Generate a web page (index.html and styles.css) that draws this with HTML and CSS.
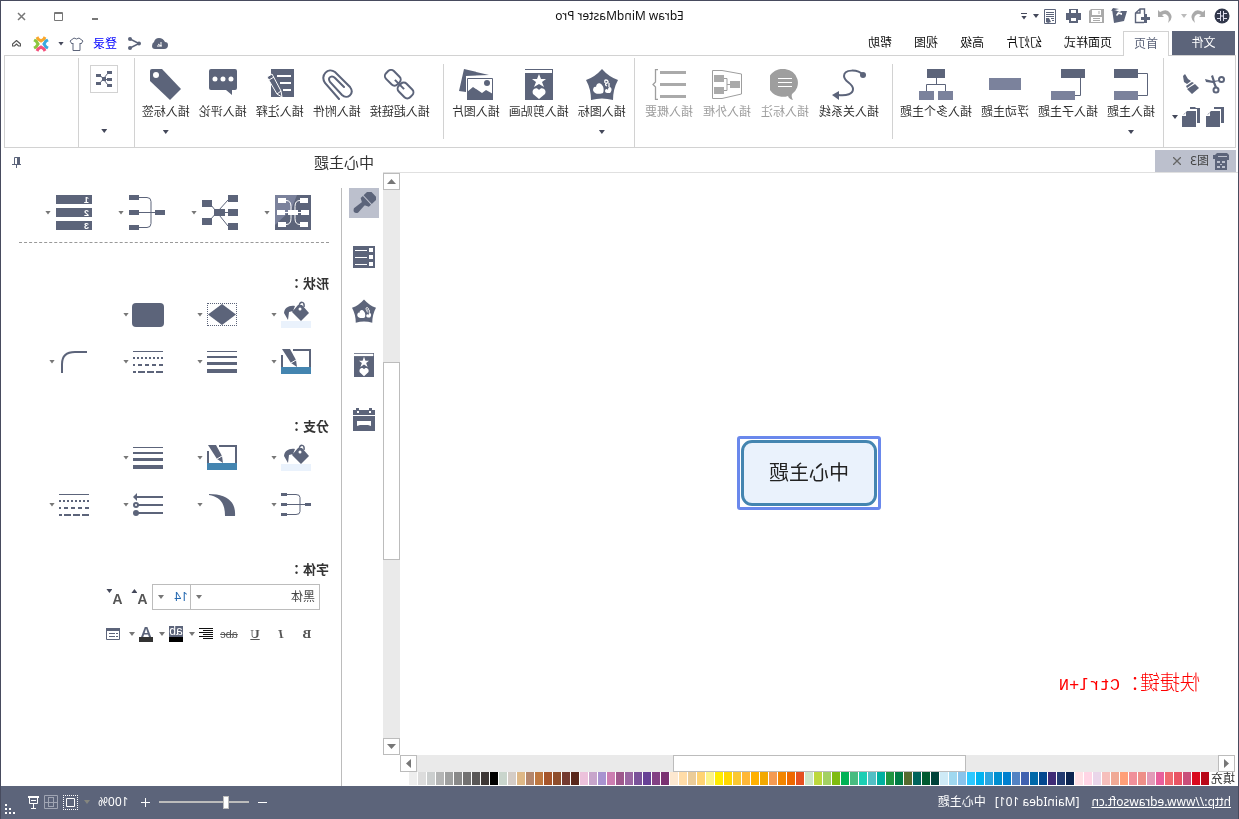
FILE: index.html
```html
<!DOCTYPE html>
<html lang="zh-CN">
<head>
<meta charset="utf-8">
<title>Edraw MindMaster Pro</title>
<link rel="stylesheet" href="styles.css">
</head>
<body>
<svg class="defs" width="0" height="0" aria-hidden="true">
  <defs>
    <symbol id="pentagon" viewBox="0 0 32 31">
      <path fill="#5c647a" d="M16 0q7 8 16 11q-5 9-5 20q-11-3-22 0q0-11-5-20q9-3 16-11z"/>
      <path fill="#fff" d="M15 24c2 1 9 2 10-3 0-3-2-4-3-3 0-4-4-5-6-2-2 2-2 6-1 8zM8 24c-2-2-2-5 0-6 2 0 2 2 2 3 1-2 3-1 3 1 0 1-1 2-2 2z"/>
      <path fill="none" stroke="#fff" stroke-width="1.3" d="M11 17c2-1 2-3 0-3s-1-3 1-3 1 2 1 3M9 14v4"/>
    </symbol>
    <symbol id="clipart" viewBox="0 0 28 31">
      <path fill="#5c647a" d="M0 0h28v31H0z"/><path fill="#fff" d="M1 1h27v3H1z"/>
      <path fill="#fff" d="M14 5l2 5h5l-4 3 2 5-5-3-5 3 2-5-4-3h5zM14 30l-6-5c-2-4 3-8 6-4 3-4 8 0 6 4z"/>
    </symbol>
    <symbol id="bucket" viewBox="0 0 30 27">
      <path fill="#eaf2fc" d="M0 20h30v7H0z"/>
      <path fill="#5c647a" d="M2 12l7-8 4 0 6 7-9 9zM16 5c6-1 11 2 11 7l-4 7-1-8-4-1z"/>
      <path fill="none" stroke="#5c647a" stroke-width="1.500" d="M7 6c-1-6 4-6 5-1"/>
      <circle cx="11" cy="8" r="1.500" fill="#fff"/>
    </symbol>
    <symbol id="pen" viewBox="0 0 30 25">
      <path fill="none" stroke="#5c647a" stroke-width="2" d="M18 1H1v18M29 19V6"/>
      <path fill="#5c647a" d="M21 0h8l-9 14-6 4 1-7z"/><path stroke="#fff" d="M15 11l5 3"/>
      <path fill="#4485b0" d="M0 18h30v7H0z"/>
    </symbol>
    <symbol id="widths" viewBox="0 0 30 22">
      <path fill="#5c647a" d="M0 0h30v1H0zM0 5h30v2H0zM0 11h30v3H0zM0 18h30v4H0z"/>
    </symbol>
    <symbol id="dashes" viewBox="0 0 30 22">
      <path stroke="#5c647a" d="M0 .5h30"/>
      <g stroke="#5c647a" stroke-width="2"><path stroke-dasharray="2 2" d="M0 7h30"/><path stroke-dasharray="4 3" d="M0 14h30"/><path stroke-dasharray="7 2" d="M0 21h30"/></g>
    </symbol>
  </defs>
</svg>

<div class="app">
  <header class="titlebar">
    <div class="quick">
      <svg width="16" height="16" viewBox="0 0 16 16"><circle cx="8" cy="8" r="7.500" fill="#32384c"/><path fill="none" stroke="#dde" d="M6.500 3v10M9.500 3v10M3 5.500h3.500M3 10.500h3.500M9.500 5.500H13M9.500 10.500H13M6.500 8h3"/></svg>
      <button class="tool" aria-label="撤销"><svg width="14" height="13" viewBox="0 0 14 13"><path fill="#aaa" d="M0 0l2 2q7-4 10 1 4 5-2 10 2-6-1-8-2-2-5 0l2 2H0z"/></svg></button>
      <i class="caret pale"></i>
      <button class="tool" aria-label="重做"><svg width="14" height="13" viewBox="0 0 14 13"><path fill="#aaa" d="M14 0l-2 2q-7-4-10 1-4 5 2 10-2-6 1-8 2-2 5 0L8 7h6z"/></svg></button>
      <button class="tool" aria-label="新建"><svg width="16" height="16" viewBox="0 0 16 16"><path fill="none" stroke="#5c647a" stroke-width="1.400" d="M6 14.500h8.500V5L10 1H5.500v5M10 1v4h4"/><path fill="#5c647a" d="M3 6h3v3h3v3H6v3H3v-3H0V9h3z"/></svg></button>
      <button class="tool" aria-label="打开"><svg width="16" height="16" viewBox="0 0 16 16"><path fill="#5c647a" d="M0 3h6l1 1 8-3-2 14-10-2zM8 1l6-1 2 3z"/><path fill="#fff" d="M5 5l4-1 2 3-1 1-2-2-3 1z"/></svg></button>
      <button class="tool" aria-label="保存"><svg width="15" height="16" viewBox="0 0 15 16"><path fill="#aaa" d="M0 1h13l2 2v12H0z"/><path fill="#fff" d="M3 2h9v5H3zM2 9h11v5H2z"/><path stroke="#aaa" d="M4 10.500h7M4 12.500h7M5 3v3"/></svg></button>
      <button class="tool" aria-label="打印"><svg width="15" height="14" viewBox="0 0 15 14"><path fill="#5c647a" d="M3 0h9v4h3v7h-3v3H3v-3H0V4h3z"/><path fill="#fff" d="M5 1h5v3H5zM5 9h5v3H5z"/></svg></button>
      <button class="tool" aria-label="打印预览"><svg width="12" height="15" viewBox="0 0 12 15"><path fill="none" stroke="#5c647a" d="M.5.500h11v14H.500zM2 3.500h8M2 5.500h8M2 7.500h8M2 9.500h3M2 11.500h2"/><path fill="#5c647a" d="M7 9h3v4l-2 1-3-1z"/></svg></button>
      <i class="caret"></i>
      <button class="tool more" aria-label="自定义"><i class="caret"></i></button>
    </div>
    <h1>Edraw MindMaster Pro</h1>
    <div class="winctl">
      <button class="tool" aria-label="最小化"><svg width="9" height="9"><path stroke="#777" stroke-width="2" d="M2 7h6"/></svg></button>
      <button class="tool" aria-label="最大化"><svg width="9" height="9"><path fill="none" stroke="#777" d="M.5.500h8v8h-8zM0 1.500h9"/></svg></button>
      <button class="tool" aria-label="关闭"><svg width="9" height="9"><path stroke="#777" stroke-width="1.500" d="M1 1l7 7M8 1L1 8"/></svg></button>
    </div>
  </header>

  <nav class="tabs">
    <button class="tab file">文件</button>
    <button class="tab active">首页</button>
    <button class="tab">页面样式</button>
    <button class="tab">幻灯片</button>
    <button class="tab">高级</button>
    <button class="tab">视图</button>
    <button class="tab">帮助</button>
    <div class="account">
      <svg width="16" height="11" viewBox="0 0 16 11"><path fill="#5c647a" d="M4 11Q0 11 0 7q0-3 3-3Q5 0 9 0q4 0 5 4 2 1 2 4 0 3-3 3z"/><path fill="none" stroke="#fff" d="M6 8h5M7 4v4l3-2"/></svg>
      <svg width="13" height="13" viewBox="0 0 13 13"><path fill="none" stroke="#5c647a" stroke-width="1.500" d="M11 2L2 6.500 11 11"/><g fill="#5c647a"><circle cx="11" cy="2" r="2"/><circle cx="2" cy="6.500" r="2"/><circle cx="11" cy="11" r="2"/></g></svg>
      <a href="#login">登录</a>
      <svg class="skin" width="15" height="14" viewBox="0 0 15 14"><path fill="none" stroke="#5c647a" d="M5 1Q7.500 3 10 1l4 3-2 3-1-1v7.500H4V6L3 7 1 4z"/></svg>
      <i class="caret"></i>
      <svg width="16" height="16" viewBox="0 0 16 16"><g fill="none" stroke-width="3"><path stroke="#f9a72b" d="M4 1l1 2 3 2 3-2 1-2"/><path stroke="#39a9e0" d="M1 4l2 1 2 3-2 3-2 1"/><path stroke="#8cc63f" d="M15 4l-2 1-2 3 2 3 2 1"/><path stroke="#f4517c" d="M4 15l1-2 3-2 3 2 1 2"/></g></svg>
      <button class="tool" aria-label="折叠功能区"><svg width="9" height="8" viewBox="0 0 9 8"><path fill="none" stroke="#555" stroke-width="1.200" d="M.5 4l4-3.500 4 3.500v2h-2l-2-2-2 2h-2z"/></svg></button>
    </div>
  </nav>

  <section class="ribbon">
    <div class="clipboard">
      <button class="tool" aria-label="剪切"><svg width="20" height="20" viewBox="0 0 20 20"><g fill="none" stroke="#5c647a" stroke-width="2"><circle cx="3.500" cy="5.500" r="2.500"/><circle cx="9" cy="16" r="2.500"/></g><path fill="#5c647a" d="M5 6l7 1 8-2-1 3-7 1-2 5-2-1 2-5-4-1zM12 1l2 1-2 6-2-1z"/></svg></button>
      <button class="tool" aria-label="格式刷"><svg width="18" height="20" viewBox="0 0 18 20"><path fill="#5c647a" d="M15 0l2 2-1 6-3 2-4-3 3-2zM8 8l6 4-1 2-7-5zM5 10l8 5-5 5-7-6z"/></svg></button>
      <span></span>
      <button class="tool" aria-label="复制"><svg width="19" height="20" viewBox="0 0 19 20"><path fill="#5c647a" d="M0 0h10v2H3v14H0zM4 4h9l5 5v11H4z"/><path fill="#fff" d="M14 4v5h4v-1l-3-1z"/></svg></button>
      <button class="tool" aria-label="粘贴"><svg width="19" height="20" viewBox="0 0 19 20"><path fill="#5c647a" d="M0 1h4l1-1h5v2H3v14H0zM4 4h9l5 5v11H4z"/><path fill="#fff" d="M14 4v5h4v-1l-3-1z"/></svg></button>
      <i class="caret"></i>
    </div>
    <i class="sep tall"></i>
    <div class="group g9 first">
      <button class="cmd"><svg width="34" height="31"><path fill="#5c647a" d="M10 0h24v9H10z"/><path fill="#7b829c" d="M10 22h24v9H10z"/><path fill="none" stroke="#5c647a" d="M10 4.500H.5v22H10"/></svg><span>插入主题</span><i class="caret"></i></button>
      <button class="cmd"><svg width="34" height="31"><path fill="#5c647a" d="M0 0h24v9H0z"/><path fill="#7b829c" d="M10 22h24v9H10z"/><path fill="none" stroke="#5c647a" d="M4.500 9v17.500H10"/></svg><span>插入子主题</span></button>
      <button class="cmd"><svg width="32" height="31"><path fill="#7b829c" d="M0 9h32v12H0z"/></svg><span>浮动主题</span></button>
      <button class="cmd"><svg width="34" height="31"><path fill="#5c647a" d="M8 0h18v9H8z"/><path fill="#7b829c" d="M0 22h15v9H0zM19 22h15v9H19z"/><path fill="none" stroke="#5c647a" d="M16.500 9v6.500M7.500 22v-6.500h19V22"/></svg><span>插入多个主题</span></button>
    </div>
    <i class="sep"></i>
    <div class="group g10 wide">
      <button class="cmd"><svg width="34" height="31" viewBox="0 0 34 31"><circle cx="3" cy="6" r="3" fill="#5c647a"/><path fill="none" stroke="#5c647a" stroke-width="2" d="M3 6C8 0 22 0 22 7c0 6-9 7-9 13 0 5 6 7 15 6"/><path fill="#5c647a" d="M27 22l7 4-7 5z"/></svg><span>插入关系线</span></button>
      <button class="cmd off"><svg width="30" height="31" viewBox="0 0 30 31"><path fill="#9e9e9e" d="M15 0a15 14 0 1 1-3 27q-1 3-5 4 2-3 1-6A15 14 0 0 1 15 0z"/><path stroke="#fff" d="M8 9.500h14M8 13.500h14M8 17.500h14"/></svg><span>插入标注</span></button>
      <button class="cmd off"><svg width="30" height="31" viewBox="0 0 30 31"><path fill="none" stroke="#9e9e9e" d="M.5 5L20 1.500h9.500v28H20L.5 25z"/><path fill="#aaa" d="M2 12h10v7H2zM18 6h10v7H18zM18 18h10v7H18z"/><path fill="none" stroke="#9e9e9e" d="M12 15.500h3M18 9.500h-3v12h3"/></svg><span>插入外框</span></button>
      <button class="cmd off"><svg width="34" height="31" viewBox="0 0 34 31"><path fill="#aaa" d="M0 2h26v3H0zM0 14h26v3H0zM0 26h26v3H0z"/><path fill="none" stroke="#9e9e9e" stroke-width="1.300" d="M28 .5h2.500V13l2.500 2.500-2.500 2.500v12.500H28"/></svg><span>插入概要</span></button>
    </div>
    <i class="sep tall"></i>
    <div class="group g9 pics">
      <button class="cmd"><svg width="32" height="31"><use href="#pentagon" width="32" height="31"/></svg><span>插入图标</span><i class="caret"></i></button>
      <button class="cmd"><svg width="28" height="31"><use href="#clipart" width="28" height="31"/></svg><span>插入剪贴画</span></button>
      <button class="cmd"><svg width="34" height="31" viewBox="0 0 34 31"><path fill="#5c647a" d="M4 6L29 0l5 22-7 1V7z"/><path fill="#fff" stroke="#5c647a" d="M.5 9.500h25v21H.500z"/><circle cx="6" cy="14" r="3" fill="#5c647a"/><path fill="#5c647a" d="M0 25l7-4 4 3 9-6 6 5v8H0z"/></svg><span>插入图片</span></button>
    </div>
    <i class="sep"></i>
    <div class="group g9 wide">
      <button class="cmd"><svg width="31" height="31" viewBox="0 0 31 31"><g fill="none" stroke="#5c647a" stroke-width="2" transform="rotate(-45 15.500 15.500)"><rect x="-1" y="10" width="16" height="11" rx="4"/><rect x="17" y="10" width="16" height="11" rx="4"/><path d="M9 15.500h13"/></g></svg><span>插入超链接</span></button>
      <button class="cmd"><svg width="32" height="31" viewBox="0 0 32 31"><path fill="none" stroke="#5c647a" stroke-width="2" stroke-linecap="round" d="M14 30L28 14c5-8-3-16-10-11L3 18c-5 7 3 13 8 8L23 13c3-5-2-7-5-4L9 18"/></svg><span>插入附件</span></button>
      <button class="cmd"><svg width="28" height="31" viewBox="0 0 28 31"><path fill="#5c647a" d="M0 0h23v28H0z"/><path stroke="#fff" stroke-width="2" d="M3 7h14M3 14h11M3 21h8"/><path fill="#5c647a" stroke="#fff" d="M22 5l5 3-10 17-5 3 1-6z"/><path stroke="#fff" d="M20 8l5 3M13 22l4 3"/></svg><span>插入注释</span></button>
      <button class="cmd"><svg width="28" height="31" viewBox="0 0 28 31"><path fill="#5c647a" d="M2 0h24q2 0 2 2v17q0 2-2 2H11l-6 5v-5H2q-2 0-2-2V2q0-2 2-2z"/><g fill="#fff"><circle cx="6" cy="10" r="2.500"/><circle cx="14" cy="10" r="2.500"/><circle cx="22" cy="10" r="2.500"/></g></svg><span>插入评论</span></button>
      <button class="cmd"><svg width="31" height="31" viewBox="0 0 31 31"><path fill="#5c647a" d="M19 0h10q2 0 2 2v10L11 31 0 20z"/><circle cx="25" cy="6" r="3" fill="#fff"/></svg><span>插入标签</span><i class="caret"></i></button>
    </div>
    <i class="sep tall"></i>
    <div class="gallery">
      <button class="tool box" aria-label="布局"><svg width="16" height="16" viewBox="0 0 16 16"><path fill="#5c647a" d="M0 0h5v3H0zM0 7h5v3H0zM0 13h5v3H0zM11 3h5v3h-5zM11 11h5v3h-5zM6 6h4v4H6z"/><path stroke="#5c647a" d="M4 2l8 10M4 14l8-10M4 8.500h4"/></svg></button>
      <i class="caret"></i>
    </div>
    <i class="sep tall"></i>
  </section>

  <main class="work">
    <section class="docs">
      <div class="doctabs">
        <button class="doctab">
          <svg width="16" height="17" viewBox="0 0 16 17"><path fill="#5c647a" d="M0 2l2-2h10l2 2h2v4h-2v11H2V7H0z"/><path fill="#bcc0cd" d="M2 3h9v1H2zM4 8h3v2H4zM9 8h3v2H9zM4 13h3v2H4zM9 13h3v2H9zM7 11h2v1H7z"/></svg>
          <span>图3</span>
          <svg width="8" height="8"><path stroke="#666" stroke-width="1.300" d="M0 0l8 8M8 0L0 8"/></svg>
        </button>
      </div>
      <div class="editor">
        <div class="canvas">
          <div class="node"><div>中心主题</div></div>
          <p class="hint">快捷键：<span>Ctrl+N</span></p>
        </div>
        <div class="vscroll">
          <button class="end" aria-label="向上"><i class="up"></i></button>
          <i class="s173"></i><i class="thumb s196"></i><i class="s179"></i>
          <button class="end" aria-label="向下"><i class="down"></i></button>
        </div>
      </div>
      <div class="hscroll">
        <button class="end" aria-label="向左"><i class="left"></i></button>
        <i class="s253"></i><i class="thumb s291"></i><i class="s257"></i>
        <button class="end" aria-label="向右"><i class="right"></i></button>
      </div>
      <div class="palette"><span>填充</span><div id="swatches"></div></div>
    </section>

    <aside class="side">
      <header><h2>中心主题</h2><button class="tool" aria-label="固定"><svg width="9" height="11" viewBox="0 0 9 11"><path fill="none" stroke="#5c647a" d="M1.500 7V.5h5V7M0 7.500h9M4.500 8v3"/><path fill="#5c647a" d="M1 0h3v7H1z"/></svg></button></header>
      <div class="sidebody">
        <div class="strip">
          <button class="tool on" aria-label="格式"><svg width="24" height="23" viewBox="0 0 24 23"><g fill="#5c647a" transform="rotate(-47 12 11)"><path d="M6-2h12v8H6zM6 7h12v3l-4 2H10l-4-2zM10 11h4l1 11q-3 5-6 0z"/></g></svg></button>
          <button class="tool" aria-label="页面"><svg width="22" height="22"><path fill="#5c647a" d="M0 0h22v22H0z"/><path fill="#fff" d="M2 2h4v4H2zM2 9h4v4H2zM2 16h4v4H2zM8 4h12v1H8zM8 11h12v1H8zM8 18h12v1H8z"/></svg></button>
          <button class="tool" aria-label="图标"><svg width="24" height="24"><use href="#pentagon" width="24" height="24"/></svg></button>
          <button class="tool" aria-label="剪贴画"><svg width="20" height="24" viewBox="0 0 28 31" preserveAspectRatio="none"><use href="#clipart" width="28" height="31"/></svg></button>
          <button class="tool" aria-label="任务"><svg width="22" height="23"><path fill="#5c647a" d="M0 2h3V0h3v2h10V0h3v2h3v5H0zM0 8h22v15H0z"/><path fill="#fff" d="M4 3h2v2H4zM16 3h2v2h-2zM4 13h14v5l-3-1H7l-3 1z"/></svg></button>
        </div>
        <div class="panel">
          <div class="grid layouts">
            <button class="pick"><svg width="36" height="35"><path fill="#5c647a" d="M0 0h36v35H0z"/><path fill="#7b829c" d="M14 0h22v30L20 15z"/><path fill="#fff" d="M3 3h8v5H3zM2 15h8v5H2zM3 27h8v5H3zM25 3h8v5h-8zM26 15h8v5h-8zM25 27h8v5h-8zM13 15h10v5H13z"/><path fill="none" stroke="#fff" d="M11 5.500q5 0 5 6v12q0 6-5 6M25 5.500q-5 0-5 6v12q0 6 5 6M2 17.500h32"/></svg><i class="caret grey"></i></button>
            <button class="pick"><svg width="36" height="35"><path fill="#5c647a" d="M0 0h10v7H0zM0 14h10v7H0zM0 28h10v7H0zM26 5h10v7H26zM26 23h10v7H26zM13 14h11v7H13z"/><path stroke="#5c647a" d="M10 5l18 20M10 31L27 10M10 17.500h5"/></svg><i class="caret grey"></i></button>
            <button class="pick"><svg width="36" height="35"><path fill="#5c647a" d="M0 15h10v5H0zM26 0h10v5H26zM26 15h10v5H26zM26 30h10v5H26z"/><path fill="none" stroke="#5c647a" d="M10 17.500h16M26 2.500h-8q-4 0-4 4v22q0 4 4 4h8"/></svg><i class="caret grey"></i></button>
            <button class="pick"><svg width="36" height="35"><path fill="#5c647a" d="M0 0h36v9H0zM0 13h36v9H0zM0 26h36v9H0z"/><g fill="#fff" font-family="Liberation Sans" font-size="9" font-weight="bold"><text x="3" y="8">1</text><text x="3" y="21">2</text><text x="3" y="34">3</text></g></svg><i class="caret grey"></i></button>
          </div>
          <h3>形状：</h3>
          <div class="grid">
            <button class="pick"><svg width="30" height="27"><use href="#bucket" width="30" height="27"/></svg><i class="caret grey"></i></button>
            <button class="pick"><svg width="30" height="23"><path fill="none" stroke="#5c647a" stroke-dasharray="1 1" d="M0 .5h30M0 22.500h30M.5 0v23M29.500 0v23"/><path fill="#5c647a" d="M15 1l14 10.500L15 22 1 11.500z"/></svg><i class="caret grey"></i></button>
            <button class="pick"><svg width="32" height="24"><rect width="32" height="24" rx="4" fill="#5c647a"/></svg><i class="caret grey"></i></button>
            <span></span>
            <button class="pick"><svg width="30" height="25"><use href="#pen" width="30" height="25"/></svg><i class="caret grey"></i></button>
            <button class="pick"><svg width="30" height="22"><use href="#widths" width="30" height="22"/></svg><i class="caret grey"></i></button>
            <button class="pick"><svg width="30" height="22"><use href="#dashes" width="30" height="22"/></svg><i class="caret grey"></i></button>
            <button class="pick"><svg width="30" height="22"><path fill="none" stroke="#5c647a" stroke-width="2" d="M2 1h12q13 0 13 12v9"/></svg><i class="caret grey"></i></button>
          </div>
          <h3>分支：</h3>
          <div class="grid">
            <button class="pick"><svg width="30" height="27"><use href="#bucket" width="30" height="27"/></svg><i class="caret grey"></i></button>
            <button class="pick"><svg width="30" height="25"><use href="#pen" width="30" height="25"/></svg><i class="caret grey"></i></button>
            <button class="pick"><svg width="30" height="22"><use href="#widths" width="30" height="22"/></svg><i class="caret grey"></i></button>
            <span></span>
            <button class="pick"><svg width="30" height="23"><path fill="#5c647a" d="M0 10h6v3H0zM24 0h6v3h-6zM24 10h6v3h-6zM24 20h6v3h-6z"/><path fill="none" stroke="#5c647a" d="M6 11.500h18M24 1.500h-9q-4 0-4 3v14q0 3 4 3h9"/></svg><i class="caret grey"></i></button>
            <button class="pick"><svg width="30" height="22"><path fill="#5c647a" d="M2 22C1 8 10 0 28 0v1C17 3 12 9 12 22z"/></svg><i class="caret grey"></i></button>
            <button class="pick"><svg width="30" height="23"><g fill="none" stroke="#5c647a" stroke-width="2"><path d="M0 4h27M0 12h25M0 20h26"/><circle cx="27" cy="12" r="2"/></g><path fill="#5c647a" d="M26 0l4 4-4 4z"/><circle cx="27" cy="20" r="3" fill="#5c647a"/></svg><i class="caret grey"></i></button>
            <button class="pick"><svg width="30" height="22"><use href="#dashes" width="30" height="22"/></svg><i class="caret grey"></i></button>
          </div>
          <h3>字体：</h3>
          <div class="fontrow">
            <label class="field family"><select aria-label="字体"><option>黑体</option></select><i class="caret grey"></i></label>
            <label class="field size"><select aria-label="字号"><option>14</option></select><i class="caret grey"></i></label>
            <button class="tool letter" aria-label="增大字号">A<i class="caret flip"></i></button>
            <button class="tool letter" aria-label="减小字号">A<i class="caret"></i></button>
          </div>
          <div class="fmtrow">
            <button class="tool fmt"><b>B</b></button>
            <button class="tool fmt"><em>I</em></button>
            <button class="tool fmt"><u>U</u></button>
            <button class="tool fmt"><s>abc</s></button>
            <button class="tool fmt" aria-label="对齐"><svg width="14" height="12"><path stroke="#111" d="M0 .5h14M0 2.500h10M0 4.500h14M0 6.500h10M0 8.500h14M0 10.500h10"/></svg><i class="caret grey"></i></button>
            <button class="tool fmt"><span class="mark">ab</span><i class="caret grey"></i></button>
            <button class="tool fmt"><span class="ink">A</span><i class="caret grey"></i></button>
            <button class="tool fmt" aria-label="更多"><svg width="14" height="12"><path fill="none" stroke="#5c647a" d="M.5.500h13v11H.500zM2 5.500h2M2 8.500h2M5 5.500h6M5 8.500h6"/><path fill="#5c647a" d="M0 0h14v3H0z"/></svg></button>
          </div>
        </div>
      </div>
    </aside>
  </main>

  <footer class="status">
    <a href="http://www.edrawsoft.cn">http://www.edrawsoft.cn</a>
    <span class="info">[MainIdea 101]</span>
    <span>中心主题</span>
    <div class="zoom">
      <button class="tool" aria-label="缩小"><svg width="9" height="9"><path stroke="#fff" d="M0 4.500h9"/></svg></button>
      <input type="range" min="0" max="100" value="23" aria-label="缩放">
      <button class="tool" aria-label="放大"><svg width="9" height="9"><path stroke="#fff" d="M0 4.500h9M4.500 0v9"/></svg></button>
      <output>100%</output>
      <i class="caret dim"></i>
      <div class="views">
        <button class="tool" aria-label="适合页面"><svg width="15" height="15"><path fill="none" stroke="#fff" stroke-dasharray="1 1" d="M0 .5h15M0 14.500h15M.5 0v15M14.500 0v15"/><path fill="none" stroke="#fff" d="M3.500 3.500h8v8h-8z"/></svg></button>
        <button class="tool" aria-label="适合宽度"><svg width="14" height="14"><path fill="none" stroke="#a0a5b3" d="M.5.500h13v13H.500zM4.500 2v10M9.500 2v10M1 7.500h12M4 2.500h6M4 11.500h6"/></svg></button>
        <button class="tool" aria-label="演示"><svg width="11" height="13"><path fill="none" stroke="#fff" d="M1.500 1v6.500h8V1M5.500 7v5M3 12.500h5M3 4.500h5"/><path stroke="#fff" stroke-width="2" d="M0 1h11"/></svg></button>
      </div>
      <svg class="grip" width="11" height="11"><path fill="#fff" d="M8 0h2v2H8zM4 4h2v2H4zM8 4h2v2H8zM0 8h2v2H0zM4 8h2v2H4zM8 8h2v2H8z"/></svg>
    </div>
  </footer>
</div>
<script src="script.js"></script>
</body>
</html>
```
FILE: styles.css
```css
* { box-sizing: border-box; }
body { margin: 0; background: #fff; color: #333; font: 12px/16px "Noto Sans", "Noto Sans CJK SC", sans-serif; }
button { font: inherit; color: inherit; background: none; border: 0; padding: 0; }
h1, h2, h3, p { margin: 0; font-weight: normal; }
svg { display: block; flex: none; }
.defs { position: absolute; }

/* The whole window is shown mirrored */
.app { display: flex; flex-direction: column; height: 100vh; min-height: 700px; transform: scaleX(-1); border: 1px solid #474b5e; border-bottom: 0; overflow: hidden; white-space: nowrap; }

.tool { display: flex; align-items: center; justify-content: center; position: relative; }
.caret { display: block; flex: none; width: 6px; height: 4px; background: #44485a; clip-path: polygon(0 0, 100% 0, 50% 100%); }
.caret.pale { background: #bbb; }
.caret.grey { background: #777; }
.caret.dim { background: #85867f; }

.titlebar { display: grid; grid-template-columns: 1fr auto 1fr; align-items: center; height: 30px; flex: none; }
.titlebar h1 { font-size: 12px; color: #111; }
.quick { display: flex; align-items: center; gap: 8px; padding-left: 8px; }
.quick .tool { width: 15px; }
.quick > .caret { margin: 0 0 0 -4px; }
.quick .more { width: 6px; margin-left: -2px; border-top: 1px solid #44485a; padding-top: 2px; }
.winctl { display: flex; justify-content: flex-end; gap: 28px; padding-right: 16px; }

.tabs { display: flex; height: 25px; flex: none; padding-left: 3px; margin-bottom: -1px; position: relative; z-index: 1; }
.tab { height: 24px; padding: 0 11px; color: #111; }
.tab.file { width: 63px; margin-right: 3px; background: #5c647a; color: #fff; }
.tab.active { height: 25px; padding: 0 10px; border: 1px solid #d2d2d2; border-bottom: 0; background: #fff; color: #5c647a; }
.account { display: flex; align-items: center; gap: 11px; margin-left: auto; padding-right: 11px; }
.account a { margin-right: -2px; color: #00f; text-decoration: none; }
.account .skin { margin-right: -4px; }
.account .caret { margin: 0 -2px; }
.account .tool { margin-left: 1px; }

.ribbon { display: flex; flex: none; height: 93px; margin: 0 3px 0 2px; border: 1px solid #d2d2d2; }
.sep { flex: none; width: 1px; background: #d2d2d2; margin: 8px 0; }
.sep.tall { margin: 2px 0 0; }
.clipboard { display: grid; grid-template-columns: 20px 20px 6px; gap: 13px 4px; align-content: center; align-items: center; width: 71px; padding: 0 0 2px 10px; }
.clipboard .caret { margin-left: -1px; }
.group { display: flex; padding: 0 7px; }
.group.first { padding-left: 8px; }
.group.wide { padding-left: 13px; }
.g9 { gap: 9px; }
.g10 { gap: 10px; }
.g10.wide { padding-right: 10px; }
.group.pics { padding: 0 8px; }
.cmd { display: flex; flex-direction: column; align-items: center; padding-top: 13px; }
.cmd span { margin-top: 4px; }
.cmd .caret { margin-top: 10px; }
.cmd.off { color: #9e9e9e; }
.gallery { display: flex; flex-direction: column; align-items: center; gap: 36px; width: 55px; padding: 9px 0 0 4px; }
.box { width: 28px; height: 28px; border: 1px solid #d2d2d2; }

.work { display: grid; grid-template-columns: minmax(0, 1fr) 382px; flex: 1; min-height: 0; }
.docs { display: flex; flex-direction: column; min-width: 0; }
.doctabs { display: flex; height: 25px; flex: none; padding: 2px 0 0 2px; border-bottom: 1px solid #e0e0e0; }
.doctab { display: flex; align-items: center; gap: 4px; width: 81px; padding-left: 7px; background: #bcc0cd; color: #444; }
.doctab svg:last-child { margin-left: 5px; }
.editor { display: flex; flex: 1; min-height: 0; }
.canvas { position: relative; flex: 1; }
.node { position: absolute; left: 357px; top: 263px; padding: 1px; border: 3px solid #6a88ec; border-radius: 3px; }
.node div { padding: 17px 25px; border: 3px solid #4485b0; border-radius: 11px; background: #eaf2fc; color: #222; font-size: 20px; line-height: 26px; }
.hint { position: absolute; left: 38px; top: 496px; color: #f00; font: 20px/26px "Noto Sans CJK SC", sans-serif; font-weight: 300; }
.hint span { font-family: "Liberation Mono", monospace; font-size: 17px; }
.vscroll { display: flex; flex-direction: column; width: 17px; background: #eaeaea; }
.hscroll { display: flex; height: 17px; flex: none; margin: 0 17px 0 3px; background: #eaeaea; }
.end { display: grid; place-items: center; flex: none; width: 17px; height: 17px; border: 1px solid #bcbcbc; background: #fff; }
.end i { width: 9px; height: 5px; background: #777; }
.end .up { clip-path: polygon(50% 0, 100% 100%, 0 100%); }
.end .down { clip-path: polygon(0 0, 100% 0, 50% 100%); }
.end .left, .end .right { width: 5px; height: 9px; }
.end .left { clip-path: polygon(100% 0, 100% 100%, 0 50%); }
.end .right { clip-path: polygon(0 0, 100% 50%, 0 100%); }
.thumb { border: 1px solid #bcbcbc; background: #fff; }
.s173 { flex: 173; }
.s179 { flex: 179; }
.s196 { flex: 196; }
.s253 { flex: 253; }
.s257 { flex: 257; }
.s291 { flex: 291; }
.palette { display: flex; flex: none; gap: 2px; height: 14px; padding-left: 3px; line-height: 14px; }
.palette div { display: flex; gap: 1px; }
.swatch { width: 8px; height: 13px; }

.side { display: flex; flex-direction: column; min-width: 0; }
.side header { display: flex; align-items: center; justify-content: space-between; height: 28px; padding: 0 11px 0 9px; }
.side h2 { font-size: 15px; line-height: 20px; }
.sidebody { display: flex; flex: 1; padding-top: 12px; }
.strip { display: flex; flex: none; flex-direction: column; gap: 24px; width: 42px; padding-left: 4px; border-right: 1px solid #bcbcbc; }
.strip .tool { width: 30px; height: 30px; }
.strip .on { background: #bcc0cd; }
.panel { flex: 1; min-width: 0; padding: 7px 18px 0 12px; }
.grid { display: grid; grid-template-columns: repeat(4, 74px); grid-auto-rows: 47px; height: 107px; margin-bottom: 20px; padding-left: 17px; }
.grid.layouts { grid-template-columns: repeat(4, 73px); height: 48px; margin-bottom: 32px; padding-left: 18px; border-bottom: 1px dashed #999; align-items: start; }
.pick { display: flex; align-items: center; gap: 4px; padding-left: 1px; }
.pick svg[width="32"] { margin: 0 -1px; }
.layouts .pick { padding-left: 0; gap: 5px; }
.panel h3 { height: 16px; font: bold 13px/16px "Noto Sans CJK TC", sans-serif; font-feature-settings: "locl" 0; }
.fontrow { display: flex; margin: 7px 0 0 9px; }
.field { display: flex; align-items: center; height: 26px; border: 1px solid #bcbcbc; padding-right: 5px; }
.field select { flex: 1; min-width: 0; height: 20px; padding: 0 0 0 4px; border: 0; background: none; appearance: none; font: inherit; color: #444; }
.family { width: 130px; }
.size { width: 39px; margin-left: -1px; }
.size select { padding-left: 2px; color: #2468b0; }
.letter { width: 25px; height: 25px; align-items: flex-end; color: #555; font: bold 14px/20px "Liberation Sans", sans-serif; }
.letter .caret { margin-bottom: 16px; }
.letter .flip { clip-path: polygon(50% 0, 100% 100%, 0 100%); }
.fmtrow { display: flex; align-items: center; height: 20px; margin-top: 14px; padding-left: 9px; color: #555; font-family: "Liberation Serif", serif; font-size: 13px; }
.fmt { gap: 4px; min-width: 26px; height: 20px; }
.fmt em, .fmt u { font-weight: bold; }
.fmt s { font: 11px/16px "Liberation Sans", sans-serif; }
.fmt:nth-child(n+5) { min-width: 30px; }
.fmt:last-child { min-width: 26px; }
.mark, .ink { display: block; width: 14px; height: 16px; text-align: center; border-bottom: 5px solid #000; background: #5c647a; color: #fff; font: 12px/11px "Liberation Sans", sans-serif; }
.ink { background: none; border-color: #333; color: #5c647a; font-weight: bold; font-size: 15px; }

.status { display: flex; align-items: center; gap: 8px; flex: none; height: 33px; margin: 0 -1px; padding: 0 4px 1px 8px; background: #5c647a; color: #fff; position: relative; }
.status a { color: #fff; }
.status .info { margin: 0 1px 0 4px; }
.zoom { display: flex; align-items: center; gap: 9px; margin-left: auto; }
.zoom input { appearance: none; width: 90px; height: 14px; margin: 0; background: linear-gradient(#bcbcbc, #bcbcbc) center / 100% 2px no-repeat; }
.zoom input::-webkit-slider-thumb { appearance: none; width: 6px; height: 13px; border: 1px solid #bcbcbc; background: #fff; }
.zoom output { margin: 0 -1px 0 3px; }
.zoom .dim { margin: 0 -3px 0 0; }
.views { display: flex; align-items: center; gap: 5px; }
.grip { align-self: flex-end; margin: 14px 0 0 4px; }
```
FILE: script.js
```js
const colors = `b80718 d9091d c94f7a e95464 ef6a70 e85f9c e29bb8 ee8f88 f0909a ff9f78 f0aa96 f6bfbc ead6ea ffd5e5 ffe1e6
0b2450 223a70 3f2b76 04488f 0068a8 4062b0 5383c3 0080cf 008fd0 2ca6e0 00b3f0 2cc8ff 89c3eb a0d8ef ceeaf6
004239 005a30 00645c 566b2f 007c45 1f9440 00b0a0 53bfc5 1cceb4 48bb80 00b155 7fbb10 a3d062 bdd83c cde6c7
e55020 ee6800 f28500 f49a52 f2a800 ffb000 ffb838 fac832 ffd800 ffec00 fcf388 ffd372 ebcc98 ffdca8 fde8d0
7a3272 834184 674196 7a5299 9a67a2 9e588c cc7eb1 a893d0 c7a5cb ecc1db
5a281c 743a30 8f4e2c a6552b bf7840 b4866c deb887 d4ccc6 c9d5cc
000000 3e3837 595757 727171 898989 9fa0a0 b4b5b5 cbcece dcdcdc eeeeee`.split(/\s+/);

const holder = document.getElementById("swatches");
for (const color of colors) {
  const swatch = document.createElement("button");
  swatch.className = "swatch";
  swatch.style.background = "#" + color;
  swatch.setAttribute("aria-label", "#" + color);
  holder.append(swatch);
}
```
